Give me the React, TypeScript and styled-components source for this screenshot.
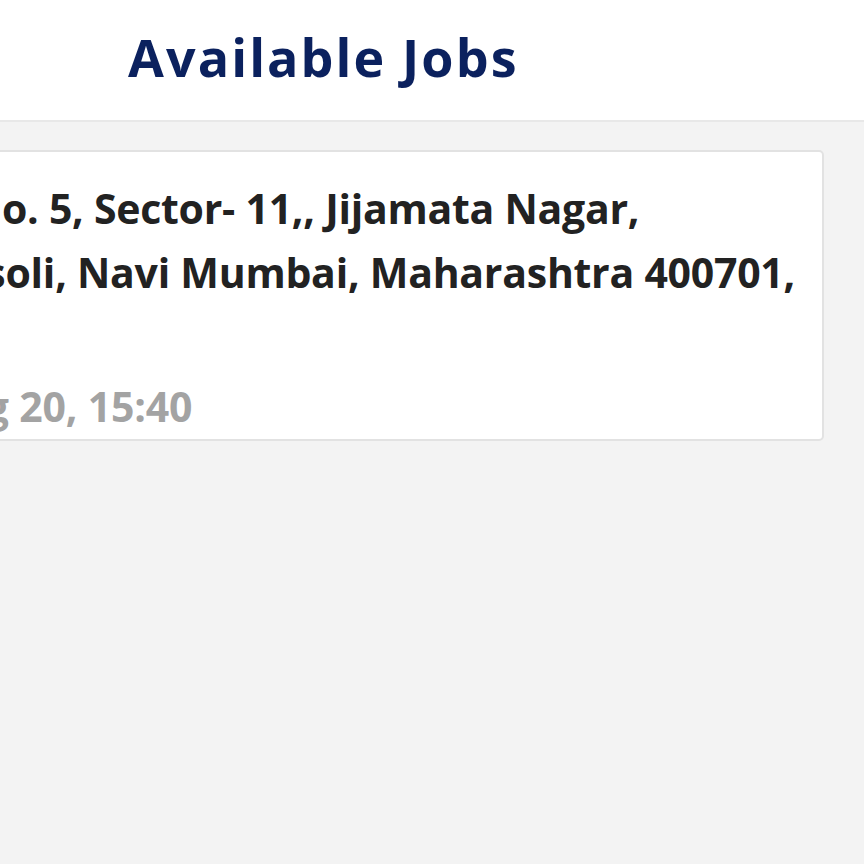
import React from "react";
import styled, { createGlobalStyle } from "styled-components";
import { Clock } from "lucide-react";

const GlobalStyle = createGlobalStyle`
  html, body {
    margin: 0;
    padding: 0;
    background: #f3f3f3;
    overflow: hidden;
  }
  body {
    font-family: "Open Sans", "Noto Sans", sans-serif;
  }
`;

const Page = styled.div`
  width: 864px;
  height: 864px;
  overflow: hidden;
  background: #f3f3f3;
`;

const Header = styled.header`
  height: 122px;
  box-sizing: border-box;
  background: #ffffff;
  border-bottom: 2px solid #e8e8e8;
  padding: 31px 0 0 128px;
`;

const Title = styled.h1`
  margin: 0;
  font-family: "Open Sans", sans-serif;
  font-weight: 700;
  font-size: 52px;
  line-height: 52px;
  letter-spacing: 2.1px;
  color: #0b215e;
  white-space: nowrap;
`;

const List = styled.main`
  padding-top: 28px;
  display: flex;
  flex-direction: column;
`;

const Card = styled.article`
  margin: 0 40px 0 -146px;
  box-sizing: border-box;
  background: #ffffff;
  border: 2px solid #e2e2e2;
  border-radius: 5px;
  padding: 24px 24px 9px 22px;
  display: flex;
  flex-direction: column;
`;

const Address = styled.div`
  display: flex;
  flex-direction: column;
`;

const AddressLine = styled.span`
  font-family: "Open Sans", sans-serif;
  font-weight: 700;
  font-size: 41px;
  line-height: 64px;
  letter-spacing: -0.25px;
  color: #222222;
  white-space: nowrap;
`;

const StampRow = styled.div`
  margin-top: 14px;
  display: flex;
  align-items: center;
  gap: 12px;
  color: #a3a3a3;
`;

const Stamp = styled.time`
  font-family: "Open Sans", sans-serif;
  font-weight: 700;
  font-size: 41px;
  line-height: 48px;
  letter-spacing: -0.2px;
  color: #a3a3a3;
  white-space: nowrap;
`;

const job = {
  address: [
    "Plot No. 5, Sector- 11,, Jijamata Nagar,",
    "Ghansoli, Navi Mumbai, Maharashtra 400701,",
    "India",
  ],
  posted: "Aug 20, 15:40",
};

export default function App() {
  return (
    <>
      <GlobalStyle />
      <Page>
        <Header>
          <Title>Available Jobs</Title>
        </Header>
        <List>
          <Card>
            <Address>
              {job.address.map((line) => (
                <AddressLine key={line}>{line}</AddressLine>
              ))}
            </Address>
            <StampRow>
              <Clock size={41} strokeWidth={2.5} />
              <Stamp>{job.posted}</Stamp>
            </StampRow>
          </Card>
        </List>
      </Page>
    </>
  );
}
